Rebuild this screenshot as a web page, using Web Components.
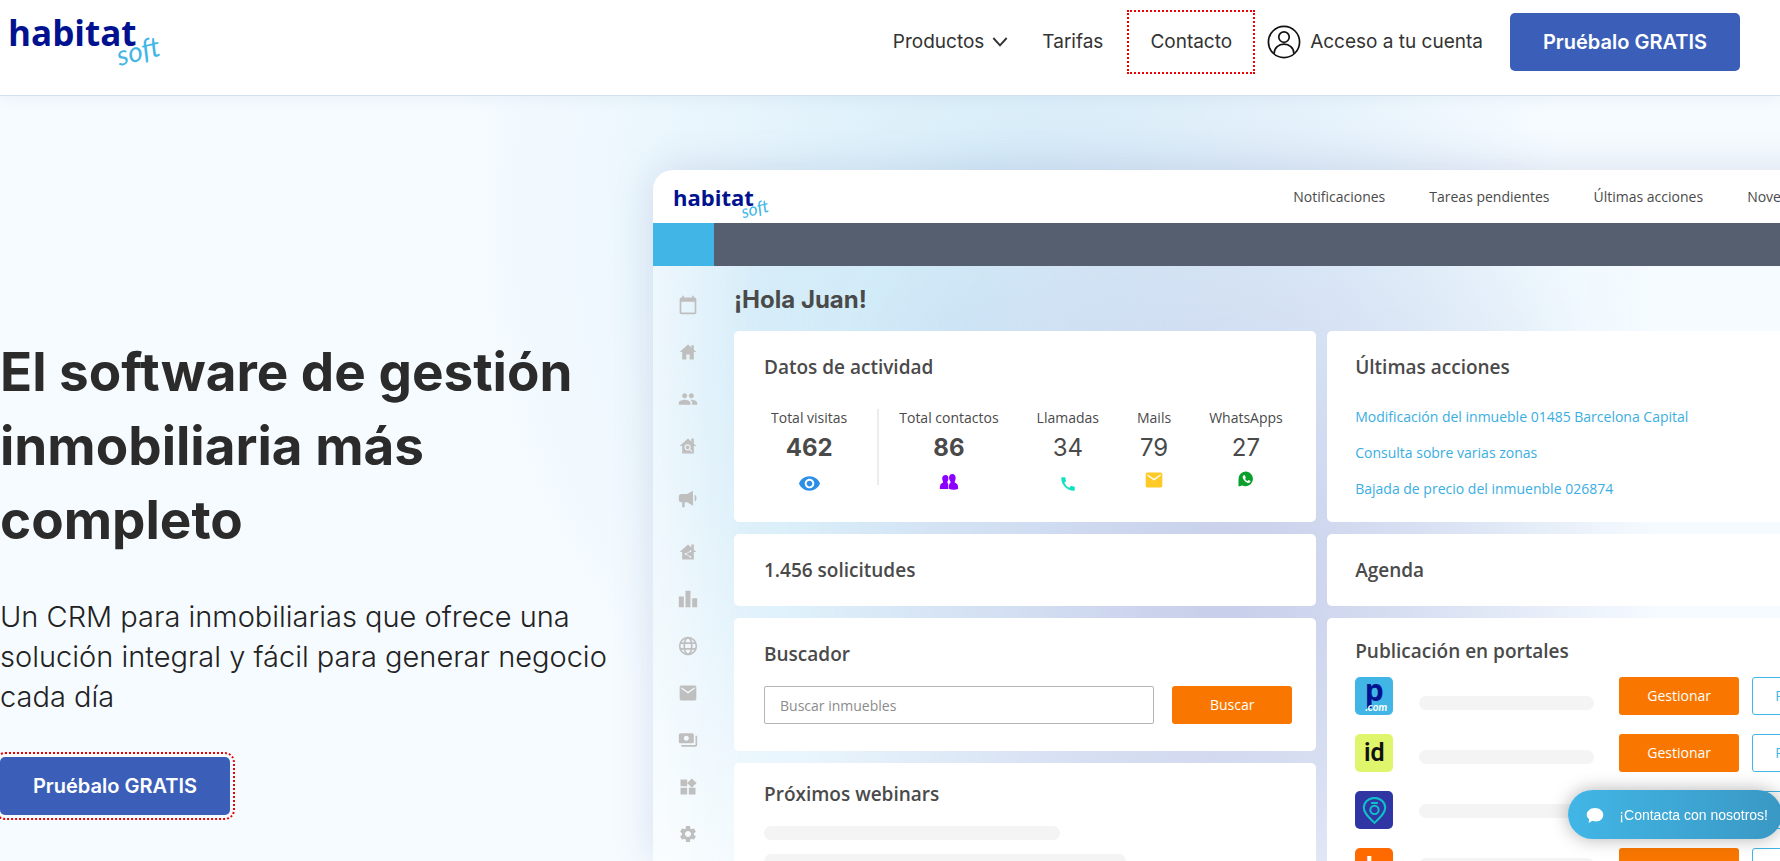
<!DOCTYPE html>
<html lang="es">
<head>
<meta charset="utf-8">
<meta name="viewport" content="width=device-width, initial-scale=1">
<title>Habitatsoft</title>
<style>
  html, body { margin: 0; height: 100%; }
  body { font-family: Inter, "Open Sans", sans-serif; color: #2b2b2b; background: #f6fbff; overflow: hidden; }
</style>
</head>
<body>
<hs-page></hs-page>

<script>
const define = (name, html, setup) => {
  const template = document.createElement('template');
  template.innerHTML = html;
  customElements.define(name, class extends HTMLElement {
    constructor() {
      super();
      this.attachShadow({ mode: 'open' });
    }
    connectedCallback() {
      if (this.shadowRoot.childNodes.length) return;
      this.shadowRoot.append(template.content.cloneNode(true));
      if (setup) setup(this, this.shadowRoot);
    }
  });
};

const HOUSE = 'M19 9.3V3h-3v3.6L12 3 2 12h3v9h14v-9h3z';
const ICONS = {
  calendar: '<path d="M20 3h-1V1h-2v2H7V1H5v2H4c-1.1 0-2 .9-2 2v16c0 1.1.9 2 2 2h16c1.100 0 2-.9 2-2V5c0-1.100-.9-2-2-2zm0 18H4V8h16z"/>',
  home: '<path d="M19 9.300V4h-3v2.600L12 3 2 12h3v9h5v-6h4v6h5v-9h3z"/>',
  people: '<path d="M16 11c1.660 0 2.990-1.340 2.990-3S17.660 5 16 5s-3 1.340-3 3 1.340 3 3 3zm-8 0c1.660 0 2.990-1.340 2.990-3S9.660 5 8 5 5 6.340 5 8s1.340 3 3 3zm0 2c-2.330 0-7 1.170-7 3.500V19h14v-2.500C15 14.170 10.330 13 8 13zm8 0c-.29 0-.62.02-.97.05 1.160.84 1.970 1.970 1.970 3.450V19h6v-2.500c0-2.330-4.670-3.500-7-3.500z"/>',
  homeSearch: `<path d="${HOUSE}"/><g fill="none" stroke="#e8f4fb" stroke-width="1.500"><circle cx="11.500" cy="13.500" r="3"/><path d="m13.700 15.700 3 3"/></g>`,
  megaphone: '<path d="M18 2v18l-7-4H8v6H5v-6H4a3 3 0 0 1-3-3V9a3 3 0 0 1 3-3h7zM20 7c3 1 3 7 0 8z"/>',
  homeShare: `<path d="${HOUSE}"/><g fill="#e8f4fb" stroke="#e8f4fb"><path fill="none" d="m15 11-6 3.500 6 3.500"/><circle cx="15" cy="11" r=".7"/><circle cx="9" cy="14.500" r=".7"/><circle cx="15" cy="18" r=".7"/></g>`,
  bars: '<path d="M1 9h6v13H1zM9 2h6v20H9zM17 11h6v11h-6z"/>',
  globe: '<g fill="none" stroke="currentColor" stroke-width="2"><circle cx="12" cy="12" r="10"/><ellipse cx="12" cy="12" rx="4.500" ry="10"/><path d="M3 8.500h18M3 15.500h18"/></g>',
  mail: '<path d="M20 3H4c-1.500 0-2 .9-2 2v14c0 1.100.9 2 2 2h16c1.100 0 2-.9 2-2V5c0-1.100-.9-2-2-2zm0 4-8 5.500L4 7V5l8 5.500L20 5z"/>',
  payments: '<path d="M19 14V6c0-1.100-.9-2-2-2H3c-1.100 0-2 .9-2 2v8c0 1.100.9 2 2 2h14c1.100 0 2-.9 2-2zm-9-1c-1.660 0-3-1.340-3-3s1.340-3 3-3 3 1.340 3 3-1.340 3-3 3zm13-6v11c0 1.100-.9 2-2 2H4v-2h17V7z"/>',
  widgets: '<path d="M13 13v8h8v-8zM3 21h8v-8H3zM3 3v8h8V3zm13.660-1.310L11 7.340 16.660 13l5.660-5.660z"/>',
  settings: '<path d="M19.140 12.940c.04-.3.060-.61.060-.94s-.02-.64-.07-.94l2.030-1.580c.18-.14.23-.41.12-.61l-1.920-3.320c-.12-.22-.37-.29-.59-.22l-2.390.96c-.5-.38-1.030-.7-1.620-.94l-.36-2.540c-.04-.24-.24-.41-.48-.41h-3.840c-.24 0-.43.17-.47.41l-.36 2.540c-.59.24-1.130.57-1.620.94l-2.390-.96c-.22-.08-.47 0-.59.22L2.740 8.870c-.12.21-.08.47.12.61l2.030 1.580c-.05.3-.09.63-.09.94s.02.64.07.94l-2.030 1.580c-.18.14-.23.41-.12.61l1.920 3.320c.12.22.37.29.59.22l2.390-.96c.5.38 1.030.7 1.620.94l.36 2.540c.05.24.24.41.48.41h3.840c.24 0 .44-.17.47-.41l.36-2.540c.59-.24 1.130-.56 1.620-.94l2.390.96c.22.08.47 0 .59-.22l1.920-3.320c.12-.22.07-.47-.12-.61zM12 15.600c-1.980 0-3.600-1.620-3.600-3.600s1.620-3.600 3.600-3.600 3.600 1.620 3.600 3.600-1.620 3.600-3.600 3.600z"/>',
  eye: '<path d="M12 4.500C7 4.500 2.730 7.610 1 12c1.730 4.390 6 7.500 11 7.500s9.270-3.110 11-7.500c-1.730-4.390-6-7.500-11-7.500zM12 17c-2.760 0-5-2.240-5-5s2.240-5 5-5 5 2.240 5 5-2.240 5-5 5zm0-8c-1.660 0-3 1.340-3 3s1.340 3 3 3 3-1.340 3-3-1.340-3-3-3z"/>',
  contacts: '<path d="M8 3.500c2.200 0 3.300 1.800 3.300 4.200 0 2-1.300 3.300-1.300 4.600 0 1 1.200 1.700 1.200 3.700v4.500H1c0-5 1-6.500 3.800-7.500.4-2-1-3-1-5.300C3.800 5.300 5.500 3.500 8 3.500z"/><path d="M16 2.500c2.700 0 4 2.300 4 4.800s-1.500 3.700-1 5.500c3 .8 4 2.400 4 7.400-3 1.500-8 1.500-11 0 0-5 0-6.300 2-7.400 0-2-2-3-2-5.500s1.300-4.800 4-4.800z"/>',
  phone: '<path d="M20.010 15.380c-1.230 0-2.420-.2-3.530-.56-.35-.12-.74-.03-1.010.24l-1.570 1.970c-2.830-1.350-5.480-3.900-6.890-6.830l1.950-1.660c.27-.28.35-.67.24-1.020-.37-1.110-.56-2.300-.56-3.530 0-.54-.45-.99-.99-.99H4.190C3.650 3 3 3.240 3 3.990 3 13.280 10.730 21 20.010 21c.71 0 .99-.63.99-1.180v-3.450c0-.54-.45-.99-.99-.99z"/>',
  whatsapp: '<path d="M12.500 2A9.800 9.800 0 1 1 7 20.500L2 22V12A10 10 0 0 1 12.500 2z"/><path fill="#fff" d="M9 7c-2 1-2 3 0 6s5 5 7.500 4c1-.5 1.500-1.500 1.500-2.500l-2.500-1.300-1.500 1.500c-1.500-.7-2.700-2-3.200-3.200l1-1.300L10.500 7z"/>',
  user: '<g fill="none" stroke="#111" stroke-width="1.200"><circle cx="12" cy="12" r="11"/><circle cx="12" cy="8.500" r="3.700"/><path d="M5 20.300c0-9 14-9 14 0"/></g>',
  chevron: '<path fill="none" stroke="currentColor" stroke-width="2.800" d="m2 6 10 11L22 6"/>',
  chat: '<path d="M12 2.500c6 0 11 3.800 11 9s-4 9-10 9c-2 0-3-.3-4.500-.8L3.500 22.500l.8-5.200C2 15.800 1 14 1 11.500c0-5.200 5-9 11-9z"/>',
  pin: '<g fill="none" stroke="#12c0c8" stroke-width="1.800"><path d="M12 23C7 18 2.500 14.500 2.500 9.500a9.500 8.700 0 0 1 19 0C21.500 14.500 17 18 12 23z"/><circle cx="12" cy="11.500" r="3.700"/><path d="M9 5.300h6"/></g>'
};

define('hs-icon', `
  <style>
    :host { display: inline-block; width: 20px; height: 20px; flex: none; }
    svg { display: block; width: 100%; height: 100%; fill: currentColor; }
  </style>
  <svg viewBox="0 0 24 24" aria-hidden="true"></svg>`,
  (host, root) => { root.querySelector('svg').innerHTML = ICONS[host.getAttribute('name')] || ''; });

/* Brand mark: sized in em from the host's font size */
define('hs-logo', `
  <style>
    :host { display: block; position: relative; font: 700 1em/1 "Open Sans", sans-serif; color: #00128f; }
    a { color: inherit; text-decoration: none; }
    .soft { position: absolute; left: 84%; top: 66%; font: italic 400 0.8em/1 Lato, sans-serif; color: #41b6e6; transform: rotate(-14deg); }
  </style>
  <a href="#">habitat<span class="soft">soft</span></a>`);

define('hs-cta', `
  <style>
    :host { display: inline-block; border-radius: 5px; }
    button { display: block; width: 230px; height: 58px; padding: 0; border: 0; border-radius: 5px; background: #3b5fb9; color: #fff; font: 600 20px/24px Inter, sans-serif; cursor: pointer; }
    :host([marked]) { outline: 2px dotted #f00000; outline-offset: 3px; }
  </style>
  <button type="button"><slot></slot></button>`);

define('hs-header', `
  <style>
    :host { display: block; position: relative; z-index: 2; background: #fff; border-bottom: 1px solid #d3e0ee; box-shadow: 0 2px 14px rgba(60, 90, 130, .07); }
    header { display: flex; align-items: center; padding: 10px 40px 21px 8px; color: #333; }
    hs-logo { font-size: 35px; align-self: flex-start; padding-top: 5px; }
    nav { display: flex; align-items: center; gap: 24px; margin-left: auto; }
    a { color: inherit; text-decoration: none; font-size: 19px; line-height: 24px; }
    .menu { display: flex; align-items: center; gap: 8px; padding-right: 10px; }
    .menu hs-icon { width: 16px; height: 16px; }
    .marked { padding: 18px 21px; border: 2px dotted #f00000; }
    .account { display: flex; align-items: center; gap: 9px; margin: 0 27px 0 12px; }
    .account hs-icon { width: 34px; height: 34px; }
  </style>
  <header>
    <hs-logo></hs-logo>
    <nav>
      <a class="menu" href="#">Productos <hs-icon name="chevron"></hs-icon></a>
      <a href="#">Tarifas</a>
      <a class="marked" href="#">Contacto</a>
    </nav>
    <a class="account" href="#"><hs-icon name="user"></hs-icon>Acceso a tu cuenta</a>
    <hs-cta>Pruébalo GRATIS</hs-cta>
  </header>`);

define('hs-intro', `
  <style>
    :host { display: block; padding-top: 239px; }
    h1 { margin: 0; max-width: 620px; font-size: 53px; line-height: 74px; font-weight: 700; color: #2b2b2b; }
    p { margin: 40px 0; max-width: 620px; font-size: 29px; line-height: 40px; font-weight: 300; color: #222; }
  </style>
  <h1>El software de gestión inmobiliaria más completo</h1>
  <p>Un CRM para inmobiliarias que ofrece una solución integral y fácil para generar negocio cada día</p>
  <hs-cta marked>Pruébalo GRATIS</hs-cta>`);

define('hs-card', `
  <style>
    :host { display: block; box-sizing: border-box; background: #fff; border-radius: 5px; padding: 24px 24px 24px 30px; }
    ::slotted(h2) { margin: 0; font-size: 19px; line-height: 24px; font-weight: 600; color: #4a4a4a; }
  </style>
  <slot name="title"></slot>
  <slot></slot>`);

define('hs-stat', `
  <style>
    :host { display: flex; flex-direction: column; align-items: center; font: 500 14px/20px "Open Sans", sans-serif; color: #4a4a4a; }
    ::slotted(strong), ::slotted(data) { font: 400 24px/28px Inter, sans-serif; margin: 6px 0 8px; }
    ::slotted(strong) { font-weight: 700; }
  </style>
  <slot></slot>`);

define('hs-stats', `
  <style>
    :host { display: flex; padding: 29px 0 0 7px; }
    .divider { width: 2px; height: 76px; margin: 1px 20px 0 30px; background: #ececec; }
    .group { display: flex; gap: 38px; }
    .eye { width: 23px; height: 23px; margin-top: 2px; color: #2b8fe8; }
    .contacts { margin-top: 2px; color: #8b00ff; }
    .phone { width: 18px; height: 18px; margin-top: 5px; color: #10e2c0; }
    .mail { color: #ffca28; }
    .whatsapp { width: 18px; height: 18px; color: #0aa02b; }
  </style>
  <hs-stat>Total visitas<strong>462</strong><hs-icon class="eye" name="eye"></hs-icon></hs-stat>
  <div class="divider"></div>
  <div class="group">
    <hs-stat>Total contactos<strong>86</strong><hs-icon class="contacts" name="contacts"></hs-icon></hs-stat>
    <hs-stat>Llamadas<data value="34">34</data><hs-icon class="phone" name="phone"></hs-icon></hs-stat>
    <hs-stat>Mails<data value="79">79</data><hs-icon class="mail" name="mail"></hs-icon></hs-stat>
    <hs-stat>WhatsApps<data value="27">27</data><hs-icon class="whatsapp" name="whatsapp"></hs-icon></hs-stat>
  </div>`);

define('hs-portals', `
  <style>
    :host { display: flex; padding-top: 14px; }
    .col { display: flex; flex-direction: column; flex: none; gap: 19px; }
    .logos { width: 38px; }
    .bars { width: 175px; gap: 40px; padding: 19px 25px 0 26px; }
    .bars i { height: 14px; border-radius: 7px; background: #f4f4f4; }
    .promo { padding-left: 13px; }
    .logo { display: grid; place-items: center; position: relative; box-sizing: border-box; height: 38px; border-radius: 5px; }
    .p { background: #41b6e6; color: #00128f; font: 700 30px/22px "Open Sans", sans-serif; padding-bottom: 12px; }
    .p small { position: absolute; right: 6px; bottom: 2px; font: italic 700 11px/12px Lato, sans-serif; color: #fff; }
    .id { background: #dff56c; color: #111; font: 600 25px/30px Roboto, sans-serif; }
    .f { background: #2f35a3; }
    .f hs-icon { width: 27px; height: 27px; }
    .h { background: #ff6a00; color: #fff; font: 700 27px/34px Inter, sans-serif; }
    button { box-sizing: border-box; width: 120px; height: 38px; padding: 0; border: 0; border-radius: 3px; background: #f97700; color: #fff; font: 500 14px/20px "Open Sans", sans-serif; }
    .promo button { padding: 0 22px; background: #fff; border: 1px solid #41b6e6; color: #41b6e6; text-align: left; }
  </style>
  <div class="col logos">
    <div class="logo p">p<small>.com</small></div>
    <div class="logo id">id</div>
    <div class="logo f"><hs-icon name="pin"></hs-icon></div>
    <div class="logo h">h</div>
  </div>
  <div class="col bars"><i></i><i></i><i></i><i></i></div>
  <div class="col"><button type="button">Gestionar</button><button type="button">Gestionar</button><button type="button">Gestionar</button><button type="button">Gestionar</button></div>
  <div class="col promo"><button type="button">Posicionar</button><button type="button">Posicionar</button><button type="button">Posicionar</button><button type="button">Posicionar</button></div>`);

define('hs-dashboard', `
  <style>
    :host { display: block; width: 73vw; border-radius: 20px 0 0 0; box-shadow: 0 0 40px rgba(70, 95, 160, .18); overflow: hidden; font-family: "Open Sans", sans-serif; }
    .top { display: flex; align-items: center; height: 53px; padding: 0 132px 0 20px; background: #fff; }
    .top hs-logo { font-size: 22px; }
    .top nav { display: flex; gap: 44px; margin-left: auto; }
    .top a { font: 500 14px/20px "Open Sans", sans-serif; color: #4a4a4a; text-decoration: none; }
    .strip { height: 43px; background: linear-gradient(90deg, #41b6e6 61px, #555f70 61px); }
    .body { display: grid; grid-template-columns: 61px minmax(0, 1fr); background:
      linear-gradient(90deg, rgba(255,255,255,.5), rgba(255,255,255,0) 100px),
      radial-gradient(ellipse 440px 520px at 570px 330px, rgba(196,202,232,.9), rgba(203,209,236,.55) 50%, rgba(246,251,255,0)),
      radial-gradient(ellipse 700px 600px at 300px 60px, rgba(203,232,247,.95), rgba(212,236,248,.75) 45%, rgba(246,251,255,0)),
      #f5fbff; }
    aside { display: flex; flex-direction: column; align-items: center; gap: 27px; padding: 29px 0 0 9px; color: #bfbfbf; }
    aside .tall { height: 32px; }
    main { padding: 18px 43px 0 20px; }
    h3 { margin: 0 0 15px; font: 700 24px/32px Inter, sans-serif; color: #4a4a4a; }
    .cards { display: grid; grid-template-columns: repeat(2, minmax(0, 1fr)); grid-template-rows: 191px 72px 133px 200px; gap: 12px 11px; }
    .right { padding-left: 28px; }
    .portals { grid-row: 3 / span 2; grid-column: 2; padding-top: 21px; }
    .webinars { padding-top: 19px; }
    ul { display: flex; flex-direction: column; gap: 16px; margin: 0; padding: 28px 0 0; list-style: none; }
    ul a { display: block; font: 500 14px/20px "Open Sans", sans-serif; color: #3aaee2; text-decoration: none; }
    form { display: flex; gap: 18px; padding-top: 20px; }
    input { flex: 1; min-width: 0; height: 38px; box-sizing: border-box; padding: 0 15px; border: 1px solid #b5b5b5; border-radius: 2px; background: #fff; font: 400 14px/20px "Open Sans", sans-serif; }
    input::placeholder { color: #8c8c8c; opacity: 1; }
    form button { width: 120px; height: 38px; padding: 0; border: 0; border-radius: 3px; background: #f97700; color: #fff; font: 500 14px/20px "Open Sans", sans-serif; }
    .line { height: 14px; width: 296px; margin-top: 20px; border-radius: 7px; background: #f4f4f4; }
    .line.long { width: 362px; margin-top: 14px; }
  </style>
  <div class="top">
    <hs-logo></hs-logo>
    <nav><a href="#">Notificaciones</a><a href="#">Tareas pendientes</a><a href="#">Últimas acciones</a><a href="#">Novedades</a></nav>
  </div>
  <div class="strip"></div>
  <div class="body">
    <aside>
      <hs-icon name="calendar"></hs-icon><hs-icon name="home"></hs-icon><hs-icon name="people"></hs-icon>
      <hs-icon name="homeSearch"></hs-icon><hs-icon class="tall" name="megaphone"></hs-icon><hs-icon name="homeShare"></hs-icon>
      <hs-icon name="bars"></hs-icon><hs-icon name="globe"></hs-icon><hs-icon name="mail"></hs-icon>
      <hs-icon name="payments"></hs-icon><hs-icon name="widgets"></hs-icon><hs-icon name="settings"></hs-icon>
    </aside>
    <main>
      <h3>¡Hola Juan!</h3>
      <div class="cards">
        <hs-card><h2 slot="title">Datos de actividad</h2><hs-stats></hs-stats></hs-card>
        <hs-card class="right"><h2 slot="title">Últimas acciones</h2>
          <ul>
            <li><a href="#">Modificación del inmueble 01485 Barcelona Capital</a></li>
            <li><a href="#">Consulta sobre varias zonas</a></li>
            <li><a href="#">Bajada de precio del inmuenble 026874</a></li>
          </ul>
        </hs-card>
        <hs-card><h2 slot="title">1.456 solicitudes</h2></hs-card>
        <hs-card class="right"><h2 slot="title">Agenda</h2></hs-card>
        <hs-card><h2 slot="title"><label for="q">Buscador</label></h2>
          <form><input id="q" type="text" placeholder="Buscar inmuebles"><button type="button">Buscar</button></form>
        </hs-card>
        <hs-card class="right portals"><h2 slot="title">Publicación en portales</h2><hs-portals></hs-portals></hs-card>
        <hs-card class="webinars"><h2 slot="title">Próximos webinars</h2><div class="line"></div><div class="line long"></div></hs-card>
      </div>
    </main>
  </div>`);

define('hs-chat', `
  <style>
    :host { position: fixed; right: -2px; bottom: 22px; z-index: 3; }
    button { display: flex; align-items: center; gap: 15px; height: 49px; padding: 0 14px 0 18px; border: 0; border-radius: 25px; background: linear-gradient(90deg, #41b6e6, #3a98c4); box-shadow: 0 0 18px rgba(0, 0, 0, .3); color: #fff; font: 400 14px/20px "Liberation Sans", Arial, sans-serif; }
    hs-icon { width: 18px; height: 18px; }
  </style>
  <button type="button"><hs-icon name="chat"></hs-icon>¡Contacta con nosotros!</button>`);

define('hs-page', `
  <style>
    :host { display: flex; flex-direction: column; height: 100vh; overflow: hidden; }
    .hero { flex: 1; min-height: 0; overflow: hidden; display: grid; grid-template-columns: minmax(0, 653fr) minmax(0, 1127fr); background:
      radial-gradient(ellipse 480px 420px at 1230px 380px, rgba(200,205,235,.7), rgba(205,212,238,.35) 60%, rgba(246,251,255,0)),
      radial-gradient(ellipse 560px 640px at 1010px 120px, rgba(206,233,247,.85), rgba(215,238,249,.5) 50%, rgba(246,251,255,0)),
      #f6fbff; }
    hs-dashboard { margin-top: 74px; }
  </style>
  <hs-header></hs-header>
  <div class="hero">
    <hs-intro></hs-intro>
    <hs-dashboard></hs-dashboard>
  </div>
  <hs-chat></hs-chat>`);
</script>
</body>
</html>
